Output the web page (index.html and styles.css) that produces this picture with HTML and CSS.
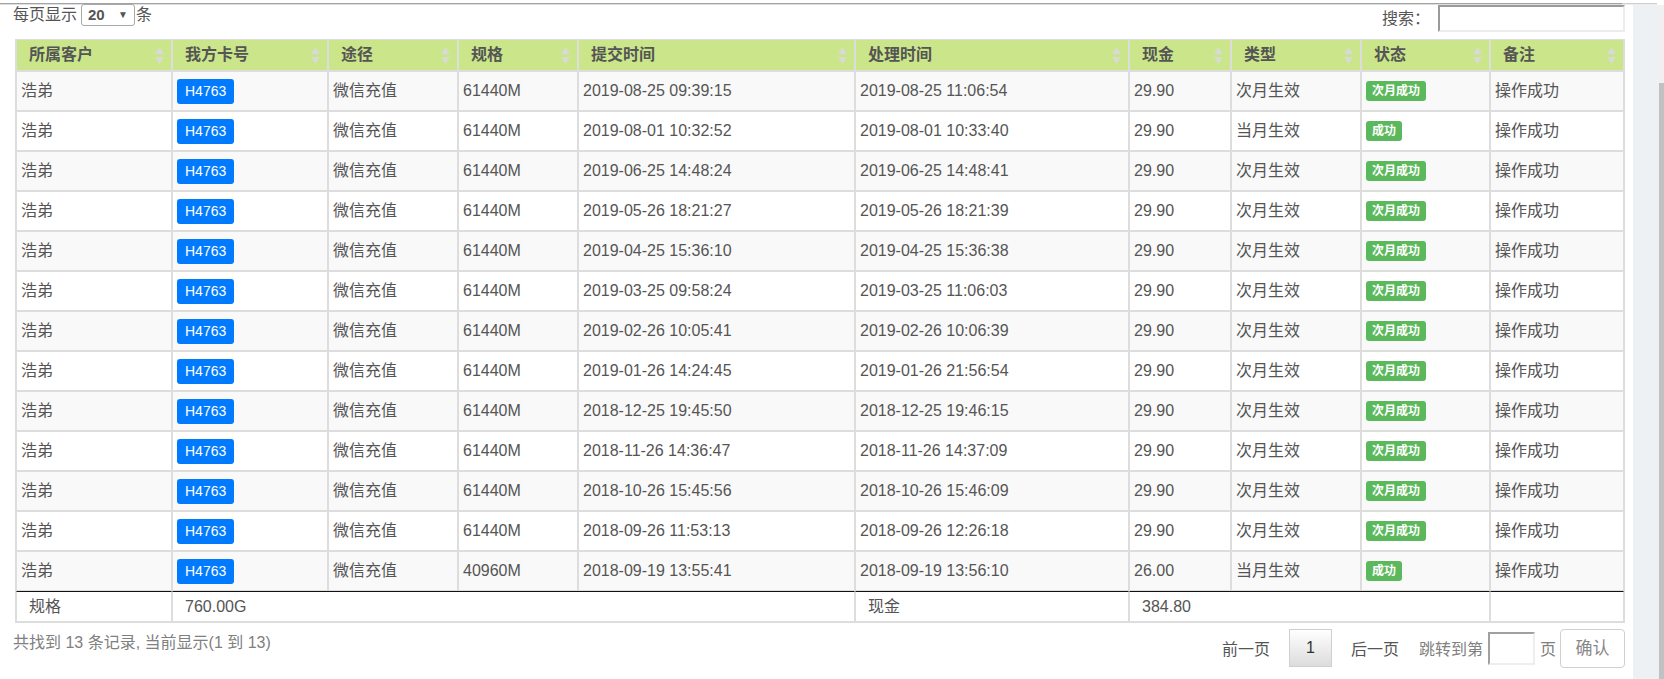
FILE: index.html
```html
<!DOCTYPE html>
<html lang="zh-CN">
<head>
<meta charset="utf-8">
<title>充值记录</title>
<link rel="stylesheet" href="styles.css">
</head>
<body>
<div class="topline"><div class="topline-dark"></div><div class="topline-light"></div></div>
<div class="frame">
  <div class="main">
    <div class="toolbar">
      <div class="length">
        <span>每页显示</span>
        <span class="select"><span class="select-val">20</span><span class="select-arrow">▼</span></span>
        <span>条</span>
      </div>
      <div class="search">
        <span>搜索：</span>
        <span class="search-input"></span>
      </div>
    </div>

    <table class="grid">
      <thead>
        <tr>
          <th class="c1"><div class="th-in"><span>所属客户</span><svg class="sort" viewBox="0 0 9 17"><path d="M4.5 0L9 7H0Z"/><path d="M0 10H9L4.5 17Z"/></svg></div></th>
          <th class="c2"><div class="th-in"><span>我方卡号</span><svg class="sort" viewBox="0 0 9 17"><path d="M4.5 0L9 7H0Z"/><path d="M0 10H9L4.5 17Z"/></svg></div></th>
          <th class="c3"><div class="th-in"><span>途径</span><svg class="sort" viewBox="0 0 9 17"><path d="M4.5 0L9 7H0Z"/><path d="M0 10H9L4.5 17Z"/></svg></div></th>
          <th class="c4"><div class="th-in"><span>规格</span><svg class="sort" viewBox="0 0 9 17"><path d="M4.5 0L9 7H0Z"/><path d="M0 10H9L4.5 17Z"/></svg></div></th>
          <th class="c5"><div class="th-in"><span>提交时间</span><svg class="sort" viewBox="0 0 9 17"><path d="M4.5 0L9 7H0Z"/><path d="M0 10H9L4.5 17Z"/></svg></div></th>
          <th class="c6"><div class="th-in"><span>处理时间</span><svg class="sort" viewBox="0 0 9 17"><path d="M4.5 0L9 7H0Z"/><path d="M0 10H9L4.5 17Z"/></svg></div></th>
          <th class="c7"><div class="th-in"><span>现金</span><svg class="sort" viewBox="0 0 9 17"><path d="M4.5 0L9 7H0Z"/><path d="M0 10H9L4.5 17Z"/></svg></div></th>
          <th class="c8"><div class="th-in"><span>类型</span><svg class="sort" viewBox="0 0 9 17"><path d="M4.5 0L9 7H0Z"/><path d="M0 10H9L4.5 17Z"/></svg></div></th>
          <th class="c9"><div class="th-in"><span>状态</span><svg class="sort" viewBox="0 0 9 17"><path d="M4.5 0L9 7H0Z"/><path d="M0 10H9L4.5 17Z"/></svg></div></th>
          <th class="c10"><div class="th-in"><span>备注</span><svg class="sort" viewBox="0 0 9 17"><path d="M4.5 0L9 7H0Z"/><path d="M0 10H9L4.5 17Z"/></svg></div></th>
        </tr>
      </thead>
      <tbody>
        <tr><td>浩弟</td><td><span class="card">H4763</span></td><td>微信充值</td><td>61440M</td><td>2019-08-25 09:39:15</td><td>2019-08-25 11:06:54</td><td>29.90</td><td>次月生效</td><td><span class="ok">次月成功</span></td><td>操作成功</td></tr>
        <tr><td>浩弟</td><td><span class="card">H4763</span></td><td>微信充值</td><td>61440M</td><td>2019-08-01 10:32:52</td><td>2019-08-01 10:33:40</td><td>29.90</td><td>当月生效</td><td><span class="ok">成功</span></td><td>操作成功</td></tr>
        <tr><td>浩弟</td><td><span class="card">H4763</span></td><td>微信充值</td><td>61440M</td><td>2019-06-25 14:48:24</td><td>2019-06-25 14:48:41</td><td>29.90</td><td>次月生效</td><td><span class="ok">次月成功</span></td><td>操作成功</td></tr>
        <tr><td>浩弟</td><td><span class="card">H4763</span></td><td>微信充值</td><td>61440M</td><td>2019-05-26 18:21:27</td><td>2019-05-26 18:21:39</td><td>29.90</td><td>次月生效</td><td><span class="ok">次月成功</span></td><td>操作成功</td></tr>
        <tr><td>浩弟</td><td><span class="card">H4763</span></td><td>微信充值</td><td>61440M</td><td>2019-04-25 15:36:10</td><td>2019-04-25 15:36:38</td><td>29.90</td><td>次月生效</td><td><span class="ok">次月成功</span></td><td>操作成功</td></tr>
        <tr><td>浩弟</td><td><span class="card">H4763</span></td><td>微信充值</td><td>61440M</td><td>2019-03-25 09:58:24</td><td>2019-03-25 11:06:03</td><td>29.90</td><td>次月生效</td><td><span class="ok">次月成功</span></td><td>操作成功</td></tr>
        <tr><td>浩弟</td><td><span class="card">H4763</span></td><td>微信充值</td><td>61440M</td><td>2019-02-26 10:05:41</td><td>2019-02-26 10:06:39</td><td>29.90</td><td>次月生效</td><td><span class="ok">次月成功</span></td><td>操作成功</td></tr>
        <tr><td>浩弟</td><td><span class="card">H4763</span></td><td>微信充值</td><td>61440M</td><td>2019-01-26 14:24:45</td><td>2019-01-26 21:56:54</td><td>29.90</td><td>次月生效</td><td><span class="ok">次月成功</span></td><td>操作成功</td></tr>
        <tr><td>浩弟</td><td><span class="card">H4763</span></td><td>微信充值</td><td>61440M</td><td>2018-12-25 19:45:50</td><td>2018-12-25 19:46:15</td><td>29.90</td><td>次月生效</td><td><span class="ok">次月成功</span></td><td>操作成功</td></tr>
        <tr><td>浩弟</td><td><span class="card">H4763</span></td><td>微信充值</td><td>61440M</td><td>2018-11-26 14:36:47</td><td>2018-11-26 14:37:09</td><td>29.90</td><td>次月生效</td><td><span class="ok">次月成功</span></td><td>操作成功</td></tr>
        <tr><td>浩弟</td><td><span class="card">H4763</span></td><td>微信充值</td><td>61440M</td><td>2018-10-26 15:45:56</td><td>2018-10-26 15:46:09</td><td>29.90</td><td>次月生效</td><td><span class="ok">次月成功</span></td><td>操作成功</td></tr>
        <tr><td>浩弟</td><td><span class="card">H4763</span></td><td>微信充值</td><td>61440M</td><td>2018-09-26 11:53:13</td><td>2018-09-26 12:26:18</td><td>29.90</td><td>次月生效</td><td><span class="ok">次月成功</span></td><td>操作成功</td></tr>
        <tr><td>浩弟</td><td><span class="card">H4763</span></td><td>微信充值</td><td>40960M</td><td>2018-09-19 13:55:41</td><td>2018-09-19 13:56:10</td><td>26.00</td><td>当月生效</td><td><span class="ok">成功</span></td><td>操作成功</td></tr>
      </tbody>
      <tfoot>
        <tr>
          <th>规格</th>
          <th colspan="4">760.00G</th>
          <th>现金</th>
          <th colspan="3">384.80</th>
          <th></th>
        </tr>
      </tfoot>
    </table>

    <div class="bottom">
      <div class="info">共找到 13 条记录, 当前显示(1 到 13)</div>
      <div class="pager">
        <span class="pg-link prev">前一页</span>
        <span class="pg-num">1</span>
        <span class="pg-link next">后一页</span>
        <span class="pg-label">跳转到第</span>
        <span class="pg-input"></span>
        <span class="pg-label">页</span>
        <span class="pg-btn">确认</span>
      </div>
    </div>
  </div>
  <div class="gutter"></div>
  <div class="vscroll"><div class="thumb"></div></div>
</div>
</body>
</html>
```

FILE: styles.css
```css
* { box-sizing: border-box; }

html, body {
  margin: 0;
  padding: 0;
  background: #fff;
}

body {
  width: 1664px;
  height: 679px;
  overflow: hidden;
  font-family: "Liberation Sans", "Noto Sans CJK SC", sans-serif;
  font-size: 16px;
  color: #555;
}

.topline {
  height: 5px;
  display: flex;
  align-items: flex-start;
  padding-top: 3px;
}
.topline-dark {
  width: 1622px;
  height: 2px;
  border-top: 1px solid #a3a3a3;
  border-bottom: 1px solid #dedede;
}
.topline-light {
  width: 35px;
  height: 2px;
  border-top: 1px solid #d0d0d0;
  border-bottom: 1px solid #ececec;
}

.frame {
  display: flex;
  height: 674px;
}

.main {
  width: 1633px;
  flex: none;
  padding: 0 8px 0 13px;
  background: #fff;
}

.gutter {
  width: 26px;
  flex: none;
  background: #eef1f3;
}

.vscroll {
  width: 5px;
  flex: none;
  background: #f1eff0;
  padding-top: 78px;
}
.thumb {
  height: 100%;
  background: #c1c1c1;
}

/* toolbar */
.toolbar {
  height: 34px;
  display: flex;
  justify-content: space-between;
  align-items: flex-start;
}

.length {
  display: flex;
  align-items: center;
  height: 22px;
  line-height: 22px;
  margin-top: -1px;
}

.select {
  display: flex;
  align-items: center;
  justify-content: space-between;
  width: 54px;
  height: 22px;
  margin: 0 1px 0 4px;
  padding: 0 6px 0 6px;
  border: 1px solid #a9a9a9;
  border-radius: 3px;
  background: #fff;
}
.select-val {
  font-weight: bold;
  font-size: 15px;
  color: #555;
}
.select-arrow {
  font-size: 10px;
  color: #555;
}

.search {
  display: flex;
  align-items: center;
  margin-top: 0;
  line-height: 27px;
}
.search-input {
  display: block;
  width: 187px;
  height: 27px;
  margin-left: 8px;
  border: 2px solid;
  border-color: #9a9a9a #ececec #ececec #9a9a9a;
  background: #fff;
}

/* table */
.grid {
  table-layout: fixed;
  width: 1610px;
  margin-left: 2px;
  border-collapse: separate;
  border-spacing: 0;
  border: 1px solid #ddd;
  border-top: 0;
}

.grid th,
.grid td {
  border: 1px solid #ddd;
  vertical-align: middle;
  white-space: nowrap;
  overflow: hidden;
}

.grid thead th {
  height: 32px;
  padding: 0 7px 0 12px;
  background: #cbe68a;
  text-align: left;
  font-weight: bold;
  font-size: 16px;
  color: #555;
  line-height: 20px;
}

.th-in {
  display: flex;
  align-items: center;
  justify-content: space-between;
}

.sort {
  width: 9px;
  height: 17px;
  flex: none;
  fill: #d8dbd3;
}

.c1 { width: 156px; }
.c2 { width: 156px; }
.c3 { width: 130px; }
.c4 { width: 120px; }
.c5 { width: 277px; }
.c6 { width: 274px; }
.c7 { width: 102px; }
.c8 { width: 130px; }
.c9 { width: 129px; }
.c10 { width: 134px; }

.grid tbody td {
  height: 40px;
  padding: 0 4px;
  line-height: 20px;
  font-size: 16px;
  color: #555;
  background: #fff;
}
.grid tbody tr:nth-child(odd) td {
  background: #f9f9f9;
}

.card {
  display: inline-block;
  padding: 4px 8px;
  line-height: 17px;
  font-size: 14px;
  color: #fff;
  background: #007bff;
  border-radius: 3px;
  vertical-align: middle;
}

.ok {
  display: inline-block;
  padding: 3px 6px 2px;
  line-height: 15px;
  font-size: 12px;
  font-weight: bold;
  color: #fff;
  background: #5cb85c;
  border-radius: 3px;
  vertical-align: middle;
}

.grid tfoot th {
  height: 31px;
  padding: 0 12px;
  border-top: 1px solid #111;
  text-align: left;
  font-weight: normal;
  font-size: 16px;
  color: #555;
  line-height: 20px;
  background: #fff;
}

/* bottom */
.bottom {
  display: flex;
  justify-content: space-between;
  align-items: flex-start;
  margin-top: 5px;
}

.info {
  line-height: 30px;
  font-size: 16px;
  color: #808080;
}

.pager {
  display: flex;
  align-items: center;
  height: 40px;
}

.pg-link {
  font-size: 16px;
  color: #555;
}
.prev { margin-right: 19px; }
.next { margin-left: 19px; margin-right: 20px; }

.pg-num {
  display: flex;
  align-items: center;
  justify-content: center;
  width: 43px;
  height: 38px;
  border: 1px solid #cfcfcf;
  background: linear-gradient(#ffffff, #dcdcdc);
  font-size: 16px;
  color: #333;
}

.pg-label {
  font-size: 16px;
  color: #808080;
}

.pg-input {
  display: block;
  width: 47px;
  height: 33px;
  margin: 0 5px;
  border: 2px solid;
  border-color: #a0a0a0 #eeeeee #eeeeee #a0a0a0;
  background: #fff;
}

.pg-btn {
  display: flex;
  align-items: center;
  justify-content: center;
  width: 65px;
  height: 39px;
  margin-left: 4px;
  padding-bottom: 3px;
  border: 1px solid #d0d0d0;
  border-radius: 4px;
  background: #fff;
  font-size: 17px;
  color: #888;
}
```
